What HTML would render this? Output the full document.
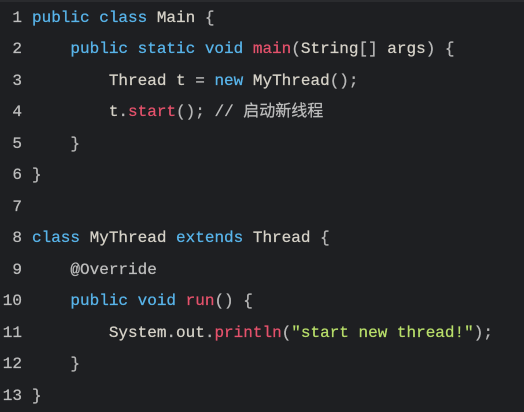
<!DOCTYPE html>
<html><head><meta charset="utf-8"><style>
html,body{margin:0;padding:0;background:#1e1f22;}
body{width:524px;height:411px;overflow:hidden;position:relative;border-top:2px solid #2a2b2e;box-sizing:border-box;}
.l{position:absolute;left:0;height:31px;line-height:31px;white-space:pre;font-family:"Liberation Mono","Noto Sans CJK SC",monospace;font-size:16px;color:#d6d2c8;-webkit-text-stroke:0.25px currentColor;}
.n{display:inline-block;width:22px;text-align:right;color:#bdbdbd;margin-right:10px;}
.k{color:#58b4ea}.m{color:#e5526c}.s{color:#b8de6a}.p{color:#b8b8b8}.c{color:#bdbdbd}
</style></head><body>
<div class="l" style="top:1px"><span class="n">1</span><span class="k">public class</span> Main <span class="p">{</span></div>
<div class="l" style="top:32px"><span class="n">2</span>    <span class="k">public static void</span> <span class="m">main</span><span class="p">(</span>String<span class="p">[]</span> args<span class="p">)</span> <span class="p">{</span></div>
<div class="l" style="top:64px"><span class="n">3</span>        Thread t <span class="p">=</span> <span class="k">new</span> MyThread<span class="p">();</span></div>
<div class="l" style="top:95px"><span class="n">4</span>        t<span class="p">.</span><span class="m">start</span><span class="p">();</span> <span class="c">// 启动新线程</span></div>
<div class="l" style="top:127px"><span class="n">5</span>    <span class="p">}</span></div>
<div class="l" style="top:158px"><span class="n">6</span><span class="p">}</span></div>
<div class="l" style="top:190px"><span class="n">7</span></div>
<div class="l" style="top:221px"><span class="n">8</span><span class="k">class</span> MyThread <span class="k">extends</span> Thread <span class="p">{</span></div>
<div class="l" style="top:253px"><span class="n">9</span>    <span class="c">@Override</span></div>
<div class="l" style="top:284px"><span class="n">10</span>    <span class="k">public void</span> <span class="m">run</span><span class="p">()</span> <span class="p">{</span></div>
<div class="l" style="top:316px"><span class="n">11</span>        System<span class="p">.</span>out<span class="p">.</span><span class="m">println</span><span class="p">(</span><span class="s">"start new thread!"</span><span class="p">);</span></div>
<div class="l" style="top:347px"><span class="n">12</span>    <span class="p">}</span></div>
<div class="l" style="top:379px"><span class="n">13</span><span class="p">}</span></div>
</body></html>
